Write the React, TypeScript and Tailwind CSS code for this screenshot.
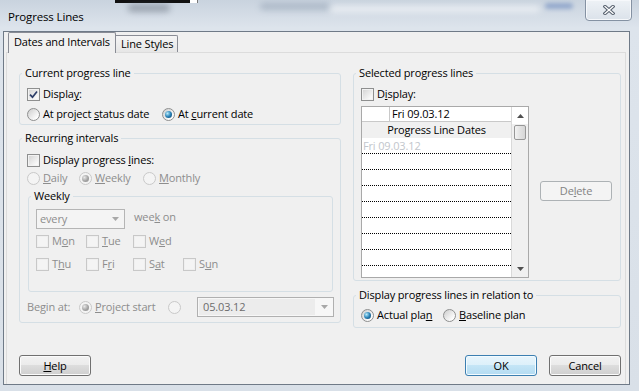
import React from "react";

const dis = "text-[#8d8d8d]";

function CheckBox({ checked = false, disabled = false }: { checked?: boolean; disabled?: boolean }) {
  return (
    <span
      className={`flex h-[13px] w-[13px] shrink-0 items-center justify-center border ${
        disabled ? "border-[#c8c8c8] bg-[#f7f7f7]" : "border-[#8e8f8f] bg-[#f8f8f8]"
      }`}
    >
      <span
        className={`flex h-[11px] w-[11px] items-center justify-center border ${
          disabled
            ? "border-[#efefef] bg-[#f4f4f4]"
            : "border-[#f2f2f2] bg-[linear-gradient(135deg,#d6d6d6,#f8f8f8_85%)]"
        }`}
      >
        {checked && (
          <svg width="9" height="9" viewBox="0 0 9 9">
            <path d="M1 4.6 L3.5 7.2 L8 1.4" fill="none" stroke="#2c3d68" strokeWidth="1.7" />
          </svg>
        )}
      </span>
    </span>
  );
}

function Radio({ checked = false, disabled = false }: { checked?: boolean; disabled?: boolean }) {
  return (
    <span
      className={`flex h-[13px] w-[13px] shrink-0 items-center justify-center rounded-full border ${
        disabled
          ? "border-[#c9c9c9] bg-[#f4f4f4]"
          : "border-[#8e8f8f] bg-[linear-gradient(135deg,#cdcdcd,#fdfdfd_80%)]"
      }`}
    >
      {checked && (
        <span
          className={`h-[7px] w-[7px] rounded-full ${
            disabled
              ? "bg-[radial-gradient(circle_at_35%_35%,#e8e8e8,#a4a4a4_55%,#8a8a8a)]"
              : "bg-[radial-gradient(circle_at_35%_35%,#b9ecfb,#2b83b8_50%,#0a3a60)]"
          }`}
        />
      )}
    </span>
  );
}

function Opt({
  control,
  children,
  className = "",
}: {
  control: React.ReactNode;
  children: React.ReactNode;
  className?: string;
}) {
  return (
    <span className={`flex items-center gap-[3px] ${className}`}>
      {control}
      <span className="whitespace-nowrap">{children}</span>
    </span>
  );
}

function Group({
  title,
  className = "",
  children,
}: {
  title: React.ReactNode;
  className?: string;
  children: React.ReactNode;
}) {
  return (
    <fieldset className={`rounded-[3px] border border-[#d5dfe5] ${className}`}>
      <legend className="ml-[2px] px-[3px] leading-[16px]">{title}</legend>
      {children}
    </fieldset>
  );
}

function Arrow({ color = "#a8a8a8", up = false }: { color?: string; up?: boolean }) {
  return (
    <svg width="7" height="4" viewBox="0 0 7 4">
      <path d={up ? "M0 4 L3.5 0 L7 4 Z" : "M0 0 L7 0 L3.5 4 Z"} fill={color} />
    </svg>
  );
}

function Btn({
  children,
  kind = "normal",
}: {
  children: React.ReactNode;
  kind?: "normal" | "default" | "disabled";
}) {
  const cls =
    kind === "default"
      ? "border-[#3c7fb1] bg-[linear-gradient(180deg,#e8f5fc_0%,#dcf0fa_50%,#c4e5f6_50%,#b3dbf2_100%)] shadow-[inset_0_0_0_1px_#f2fbff]"
      : kind === "disabled"
      ? "border-[#adb2b5] bg-[#f4f4f4] text-[#838383]"
      : "border-[#707070] bg-[linear-gradient(180deg,#f2f2f2_0%,#ebebeb_50%,#dddddd_50%,#cfcfcf_100%)] shadow-[inset_0_0_0_1px_#fbfbfb]";
  return (
    <div className={`flex h-[21px] w-[72px] items-center justify-center rounded-[3px] border ${cls}`}>
      {children}
    </div>
  );
}

function ProgressGrid() {
  const rows = [0, 1, 2, 3, 4, 5, 6, 7];
  return (
    <div className="mt-[3px] flex h-[172px] w-[168px] border border-[#a9a9a9] bg-white">
      <div className="flex w-[149px] flex-col">
        <div className="flex h-[15px] border-b border-[#c9c9c9]">
          <div className="w-[28px] border-r border-[#c9c9c9] bg-white" />
          <div className="flex-1 bg-white pl-[2px] leading-[14px]">Fri 09.03.12</div>
        </div>
        <div className="flex h-[16px] items-center justify-center bg-[#f0f0f0] leading-[16px]">
          Progress Line Dates
        </div>
        {rows.map((i) => (
          <div
            key={i}
            className="h-[16px] border-b border-dotted border-black pl-[1px] leading-[15px] text-[#c2c6cc]"
          >
            {i === 0 ? "Fri 09.03.12" : ""}
          </div>
        ))}
        <div className="flex-1" />
      </div>
      <div className="flex w-[17px] flex-col border-l border-[#d9d9d9] bg-[#f0f0f0]">
        <div className="flex h-[17px] items-center justify-center bg-white">
          <Arrow up color="#505050" />
        </div>
        <div className="mx-[2px] mt-[1px] h-[15px] rounded-[2px] border border-[#979797] bg-[linear-gradient(90deg,#f3f3f3,#e2e2e2_50%,#d6d6d6)]" />
        <div className="flex-1" />
        <div className="flex h-[17px] items-center justify-center">
          <Arrow color="#505050" />
        </div>
      </div>
    </div>
  );
}

export default function App() {
  return (
    <div className="relative h-[391px] w-[639px] overflow-hidden bg-[linear-gradient(180deg,#c9d3de_0px,#dde4ec_28px,#d9e0e8_100%)] font-['Open_Sans','Noto_Sans',sans-serif] text-[11px] leading-[16px] tracking-[-0.15px] text-black">
      {/* title bar */}
      <div className="relative flex h-[31px] items-start">
        <div className="pointer-events-none absolute left-[115px] top-0 h-[3px] w-[75px] bg-[#111]" />
        <div className="pointer-events-none absolute left-[190px] top-0 h-[3px] w-[8px] border-r border-[#777] bg-white" />
        <div className="pointer-events-none absolute left-[128px] top-[4px] h-[8px] w-[42px] rounded-full bg-[#4b5563] opacity-40 blur-[3px]" />
        <div className="pointer-events-none absolute left-[260px] top-[3px] h-[7px] w-[70px] rounded-full bg-[#7b8ba0] opacity-40 blur-[3px]" />
        <div className="pointer-events-none absolute left-[330px] top-[6px] h-[6px] w-[210px] rounded-full bg-[#ffffff] opacity-60 blur-[3px]" />
        <div className="pointer-events-none absolute left-[545px] top-[3px] h-[6px] w-[28px] rounded-full bg-[#5b7cb8] opacity-50 blur-[2px]" />
        <span className="relative ml-[8px] mt-[9px] text-[11.5px]">Progress Lines</span>
        <div className="relative ml-auto mr-[7px] -mt-[1px] flex h-[22px] w-[47px] items-center justify-center rounded-b-[4px] border border-[#8592a3] bg-[linear-gradient(180deg,#eef2f6,#dbe2ea)] shadow-[inset_0_0_0_1px_#f6f8fb]">
          <svg width="12" height="10" viewBox="0 0 12 10">
            <path d="M2 1.5 L10 8.5 M10 1.5 L2 8.5" stroke="#56606e" strokeWidth="3.4" strokeLinecap="square" />
            <path d="M2 1.5 L10 8.5 M10 1.5 L2 8.5" stroke="#ffffff" strokeWidth="1.3" strokeLinecap="square" />
          </svg>
        </div>
      </div>

      {/* client area */}
      <div className="ml-[3px] flex h-[354px] w-[627px] flex-col border border-[#6f7a87] bg-[#f0f0f0]">
        <div className="ml-[2px] flex w-[620px] flex-1 flex-col">
          {/* tabs */}
          <div className="flex h-[20px] items-end pl-[2px]">
            <div className="relative z-10 -mb-[1px] flex h-[21px] w-[108px] items-center rounded-t-[2px] border border-b-0 border-[#898c95] bg-[#f0f0f0] pb-[2px] pl-[5px]">
              Dates and Intervals
            </div>
            <div className="flex h-[17px] w-[62px] items-center rounded-tr-[2px] border border-b-0 border-l-0 border-[#898c95] bg-[linear-gradient(180deg,#f5f5f5,#e6e6e6)] pl-[5px]">
              Line Styles
            </div>
          </div>

          {/* panel */}
          <div className="flex flex-1 flex-col border-x border-t border-[#dcdcdc]">
            <div className="flex gap-[12px] pl-[12px] pt-[12px]">
              {/* left column */}
              <div className="flex w-[322px] flex-col">
                <Group title="Current progress line">
                  <div className="flex flex-col pl-[7px] pt-[3px]">
                    <div className="flex h-[20px] items-center">
                      <Opt control={<CheckBox checked />}>
                        Displa<u>y</u>:
                      </Opt>
                    </div>
                    <div className="flex h-[20px] items-center">
                      <Opt control={<Radio />} className="w-[135px]">
                        At project <u>s</u>tatus date
                      </Opt>
                      <Opt control={<Radio checked />}>
                        At <u>c</u>urrent date
                      </Opt>
                    </div>
                  </div>
                </Group>

                <Group title="Recurring intervals" className="mt-[5px]">
                  <div className="flex flex-col pb-[5px] pt-[5px]">
                    <div className="flex h-[18px] items-center pl-[7px]">
                      <Opt control={<CheckBox />}>
                        Display progress <u>l</u>ines:
                      </Opt>
                    </div>
                    <div className={`flex h-[18px] items-center pl-[7px] ${dis}`}>
                      <Opt control={<Radio disabled />} className="w-[52px]">
                        <u>D</u>aily
                      </Opt>
                      <Opt control={<Radio checked disabled />} className="w-[64px]">
                        <u>W</u>eekly
                      </Opt>
                      <Opt control={<Radio disabled />}>
                        <u>M</u>onthly
                      </Opt>
                    </div>

                    <Group title="Weekly" className="ml-[8px] mt-[1px] w-[305px]">
                      <div className="flex flex-col pb-[18px] pl-[7px] pt-[5px]">
                        <div className="flex items-center">
                          <div className="flex h-[20px] w-[89px] border border-[#b5b5b5] bg-[#f4f4f4]">
                            <span className={`flex-1 pl-[3px] leading-[18px] ${dis}`}>every</span>
                            <span className="flex w-[17px] items-center justify-center">
                              <Arrow />
                            </span>
                          </div>
                          <span className={`-mt-[4px] ml-[9px] ${dis}`}>
                            wee<u>k</u> on
                          </span>
                        </div>
                        <div className={`mt-[3px] flex h-[18px] items-center ${dis}`}>
                          <Opt control={<CheckBox disabled />} className="w-[50px]">
                            M<u>o</u>n
                          </Opt>
                          <Opt control={<CheckBox disabled />} className="w-[47px]">
                            <u>T</u>ue
                          </Opt>
                          <Opt control={<CheckBox disabled />}>
                            W<u>e</u>d
                          </Opt>
                        </div>
                        <div className={`mt-[5px] flex h-[18px] items-center ${dis}`}>
                          <Opt control={<CheckBox disabled />} className="w-[50px]">
                            T<u>h</u>u
                          </Opt>
                          <Opt control={<CheckBox disabled />} className="w-[47px]">
                            F<u>r</u>i
                          </Opt>
                          <Opt control={<CheckBox disabled />} className="w-[50px]">
                            S<u>a</u>t
                          </Opt>
                          <Opt control={<CheckBox disabled />}>
                            S<u>u</u>n
                          </Opt>
                        </div>
                      </div>
                    </Group>

                    <div className={`mt-[5px] flex h-[20px] items-center pl-[7px] ${dis}`}>
                      <span className="w-[52px]">Begin at:</span>
                      <Opt control={<Radio checked disabled />} className="w-[89px]">
                        <u>P</u>roject start
                      </Opt>
                      <span className="w-[29px]">
                        <Radio disabled />
                      </span>
                      <div className="flex h-[20px] w-[137px] border border-[#b0b0b0] bg-[#f7f7f7]">
                        <span className="m-[1px] flex-1 bg-[#ececec] pl-[4px] leading-[16px] text-[#6d6d6d]">
                          05.03.12
                        </span>
                        <span className="flex w-[17px] items-center justify-center">
                          <Arrow />
                        </span>
                      </div>
                    </div>
                  </div>
                </Group>
              </div>

              {/* right column */}
              <div className="flex w-[268px] flex-col">
                <Group title="Selected progress lines">
                  <div className="flex pb-[2px] pl-[7px] pt-[4px]">
                    <div className="flex flex-col">
                      <div className="flex h-[18px] items-center">
                        <Opt control={<CheckBox />}>
                          D<u>i</u>splay:
                        </Opt>
                      </div>
                      <ProgressGrid />
                    </div>
                    <div className="ml-[11px] mt-[96px]">
                      <div className="flex h-[20px] w-[72px] items-center justify-center rounded-[3px] border border-[#adb2b5] bg-[#f4f4f4] text-[#838383]">
                        De<u>l</u>ete
                      </div>
                    </div>
                  </div>
                </Group>

                <Group title="Display progress lines in relation to" className="mt-[6px]">
                  <div className="flex h-[18px] items-center pl-[7px] mt-[3px] mb-[3px]">
                    <Opt control={<Radio checked />} className="w-[82px]">
                      Actual pla<u>n</u>
                    </Opt>
                    <Opt control={<Radio />}>
                      <u>B</u>aseline plan
                    </Opt>
                  </div>
                </Group>
              </div>
            </div>

            {/* buttons */}
            <div className="mt-auto flex items-center pb-[8px] pl-[12px] pr-[4px]">
              <Btn>
                <u>H</u>elp
              </Btn>
              <div className="ml-auto flex gap-[12px]">
                <Btn kind="default">OK</Btn>
                <Btn>Cancel</Btn>
              </div>
            </div>
          </div>
        </div>
      </div>
    </div>
  );
}
